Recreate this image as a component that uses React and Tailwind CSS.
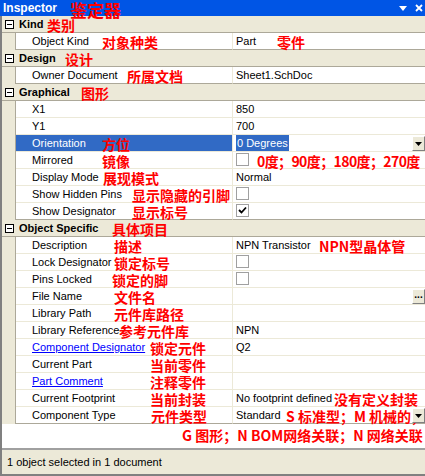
import React from 'react';

const UI = { fontFamily: '"Liberation Sans", Arial, sans-serif' };
const RED = { fontFamily: '"Noto Sans CJK SC", "Liberation Sans", sans-serif' };

const GROUPS = [
  {
    title: 'Kind',
    notes: [{ t: '类别', cls: 'left-[45px]' }],
    rows: [
      { label: 'Object Kind', value: 'Part', notes: [{ t: '对象种类', cls: 'left-[100px]' }, { t: '零件', cls: 'left-[275px]' }] },
    ],
  },
  {
    title: 'Design',
    notes: [{ t: '设计', cls: 'left-[63px]' }],
    rows: [
      { label: 'Owner Document', value: 'Sheet1.SchDoc', notes: [{ t: '所属文档', cls: 'left-[125px]' }] },
    ],
  },
  {
    title: 'Graphical',
    notes: [{ t: '图形', cls: 'left-[79px]' }],
    rows: [
      { label: 'X1', value: '850' },
      { label: 'Y1', value: '700' },
      { label: 'Orientation', value: '0 Degrees', selected: true, combo: true, notes: [{ t: '方位', cls: 'left-[100px]' }] },
      { label: 'Mirrored', check: false, notes: [{ t: '镜像', cls: 'left-[100px]' }, { t: '0度；90度；180度；270度', cls: 'left-[255px] tracking-[-0.6px]' }] },
      { label: 'Display Mode', value: 'Normal', notes: [{ t: '展现模式', cls: 'left-[101px]' }] },
      { label: 'Show Hidden Pins', check: false, notes: [{ t: '显示隐藏的引脚', cls: 'left-[130px]' }] },
      { label: 'Show Designator', check: true, notes: [{ t: '显示标号', cls: 'left-[130px]' }] },
    ],
  },
  {
    title: 'Object Specific',
    notes: [{ t: '具体项目', cls: 'left-[110px]' }],
    rows: [
      { label: 'Description', value: 'NPN Transistor', notes: [{ t: '描述', cls: 'left-[112px]' }, { t: 'NPN型晶体管', cls: 'left-[317px]' }] },
      { label: 'Lock Designator', check: false, notes: [{ t: '锁定标号', cls: 'left-[112px]' }] },
      { label: 'Pins Locked', check: false, notes: [{ t: '锁定的脚', cls: 'left-[110px]' }] },
      { label: 'File Name', value: '', dots: true, notes: [{ t: '文件名', cls: 'left-[112px]' }] },
      { label: 'Library Path', value: '', notes: [{ t: '元件库路径', cls: 'left-[112px]' }] },
      { label: 'Library Reference', value: 'NPN', notes: [{ t: '参考元件库', cls: 'left-[117px]' }] },
      { label: 'Component Designator', link: true, value: 'Q2', notes: [{ t: '锁定元件', cls: 'left-[148px]' }] },
      { label: 'Current Part', value: '', notes: [{ t: '当前零件', cls: 'left-[148px]' }] },
      { label: 'Part Comment', link: true, value: '', notes: [{ t: '注释零件', cls: 'left-[148px]' }] },
      { label: 'Current Footprint', value: 'No footprint defined', notes: [{ t: '当前封装', cls: 'left-[148px]' }, { t: '没有定义封装', cls: 'left-[332px]' }] },
      { label: 'Component Type', value: 'Standard', combo: true, notes: [{ t: '元件类型', cls: 'left-[149px]' }, { t: 'S 标准型；M 机械的；', cls: 'left-[284px]' }] },
    ],
  },
];

function Note({ t, cls }) {
  return (
    <span
      className={`absolute top-[2px] z-10 text-[14px] leading-[15px] font-bold text-[#ff0000] whitespace-nowrap ${cls}`}
      style={RED}
    >
      {t}
    </span>
  );
}

function Check({ on }) {
  return (
    <span className="mt-[1px] ml-[3px] w-[13px] h-[13px] border border-[#a0a0a0] bg-white flex items-center justify-center">
      {on && (
        <svg width="9" height="9" viewBox="0 0 9 9">
          <path d="M1 4 L3.5 6.5 L8 1.5" stroke="#000" strokeWidth="1.8" fill="none" />
        </svg>
      )}
    </span>
  );
}

function DropBtn() {
  return (
    <span className="absolute right-0 top-[1px] w-[13px] h-[15px] bg-[#ece9d8] border-l border-t border-white border-r border-b border-r-[#808080] border-b-[#808080] flex items-center justify-center z-20">
      <svg width="7" height="4" viewBox="0 0 7 4"><path d="M0 0 H7 L3.5 4 Z" fill="#000" /></svg>
    </span>
  );
}

function Row({ row, last }) {
  return (
    <div className="relative flex h-[17px]">
      <div className="w-[14px] bg-[#ece9d8] border-r border-[#aca899]" />
      <div
        className={`w-[217px] flex items-center pl-[16px] border-r border-[#ece9d8] ${last ? 'border-b border-b-[#aca899]' : 'border-b border-b-[#ece9d8]'} ${row.selected ? 'bg-[#316ac5] text-white' : 'bg-white'}`}
      >
        <span className={row.link ? 'text-[#0000ff] underline' : ''}>{row.label}</span>
      </div>
      <div className={`relative flex-1 flex items-center bg-white ${last ? 'border-b border-[#aca899]' : 'border-b border-[#ece9d8]'}`}>
        {row.check !== undefined ? (
          <div className="h-full flex items-start"><Check on={row.check} /></div>
        ) : (
          <span className={`ml-[3px] ${row.selected ? 'bg-[#316ac5] text-white px-[1px]' : ''}`}>{row.value}</span>
        )}
        {row.combo && <DropBtn />}
        {row.dots && (
          <span className="absolute right-0 top-[1px] w-[13px] h-[15px] bg-[#ece9d8] border-l border-t border-white border-r border-b border-r-[#808080] border-b-[#808080] flex items-center justify-center text-[10px] font-bold leading-none pb-[4px] z-20">
            ...
          </span>
        )}
      </div>
      {(row.notes || []).map((n) => (
        <Note key={n.t} {...n} />
      ))}
    </div>
  );
}

function Group({ g }) {
  return (
    <div>
      <div className="relative flex items-center h-[17px] bg-[#ece9d8] border-b border-[#aca899]">
        <span className="ml-[3px] w-[9px] h-[9px] border border-[#000] bg-white flex items-center justify-center">
          <span className="w-[5px] h-[1px] bg-black" />
        </span>
        <span className="ml-[5px] font-bold">{g.title}</span>
        {g.notes.map((n) => (
          <Note key={n.t} {...n} />
        ))}
      </div>
      {g.rows.map((r, i) => (
        <Row key={r.label} row={r} last={i === g.rows.length - 1} />
      ))}
    </div>
  );
}

export default function App() {
  return (
    <div className="w-[425px] h-[476px] bg-white text-[11px] text-black flex flex-col overflow-hidden" style={UI}>
      <div className="relative z-30 h-[16px] bg-[#0055e5] flex items-center pl-[3px] text-white">
        <span className="text-[12px] font-bold">Inspector</span>
        <span
          className="absolute left-[70px] top-[1px] text-[17px] leading-[18px] font-bold text-[#ff0000]"
          style={RED}
        >
          鉴定器
        </span>
        <div className="ml-auto flex items-center gap-[8px] pr-[2px]">
          <svg width="8" height="5" viewBox="0 0 8 5"><path d="M0 0 H8 L4 5 Z" fill="#fff" /></svg>
          <svg width="8" height="8" viewBox="0 0 8 8"><path d="M1 1 L7 7 M7 1 L1 7" stroke="#fff" strokeWidth="1.8" /></svg>
        </div>
      </div>
      <div className="flex-1 flex flex-col border-l-2 border-[#808080]">
        {GROUPS.map((g) => (
          <Group key={g.title} g={g} />
        ))}
        <div className="relative h-[26px] bg-white border-b-2 border-[#a0a0a0]">
          <Note t="G 图形；N BOM网络关联；N 网络关联" cls="left-[180px] top-[4px]" />
        </div>
        <div className="flex-1 bg-[#ece9d8] flex items-center pl-[5px] border-b-2 border-[#808080]">
          1 object selected in 1 document
        </div>
      </div>
    </div>
  );
}
